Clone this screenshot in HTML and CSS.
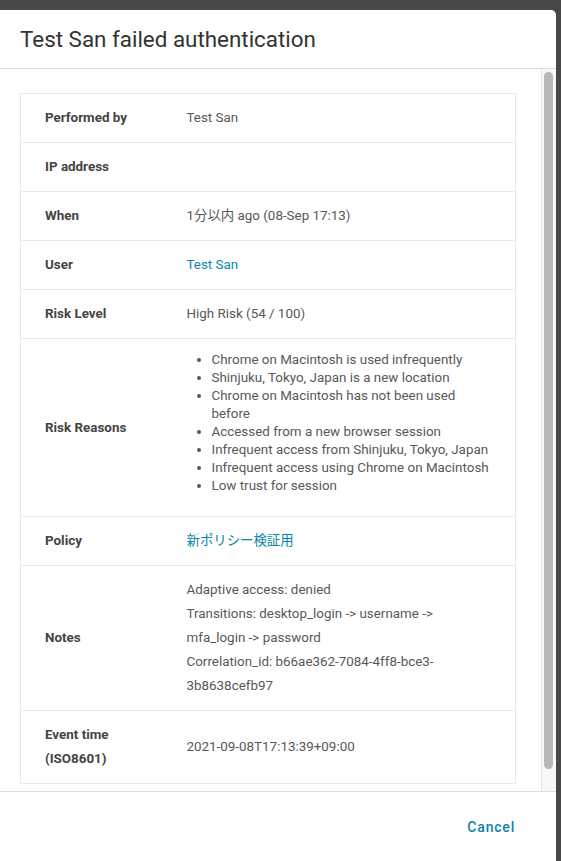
FILE: index.html
```html
<!DOCTYPE html>
<html lang="en">
<head>
  <meta charset="UTF-8" />
  <meta name="viewport" content="width=device-width, initial-scale=1.0" />
  <title>Event details</title>
  <link rel="stylesheet" href="styles.css">
</head>
<body>

  <div class="dialog">
    <div class="dialog-header">
      <h2>Test San failed authentication</h2>
    </div>

    <div class="dialog-body">
      <div class="dialog-content">
        <table class="details">
          <colgroup>
            <col class="col-label">
            <col>
          </colgroup>
          <tr>
            <td class="label">Performed by</td>
            <td>Test San</td>
          </tr>
          <tr>
            <td class="label">IP address</td>
            <td></td>
          </tr>
          <tr>
            <td class="label">When</td>
            <td>1分以内 ago (08-Sep 17:13)</td>
          </tr>
          <tr>
            <td class="label">User</td>
            <td><a href="#">Test San</a></td>
          </tr>
          <tr>
            <td class="label">Risk Level</td>
            <td>High Risk (54 / 100)</td>
          </tr>
          <tr>
            <td class="label">Risk Reasons</td>
            <td>
              <ul class="reasons">
                <li>Chrome on Macintosh is used infrequently</li>
                <li>Shinjuku, Tokyo, Japan is a new location</li>
                <li>Chrome on Macintosh has not been used before</li>
                <li>Accessed from a new browser session</li>
                <li>Infrequent access from Shinjuku, Tokyo, Japan</li>
                <li>Infrequent access using Chrome on Macintosh</li>
                <li>Low trust for session</li>
              </ul>
            </td>
          </tr>
          <tr>
            <td class="label">Policy</td>
            <td><a href="#">新ポリシー検証用</a></td>
          </tr>
          <tr>
            <td class="label">Notes</td>
            <td>
              <div>Adaptive access: denied</div>
              <div>Transitions: desktop_login -&gt; username -&gt; mfa_login -&gt; password</div>
              <div>Correlation_id: b66ae362-7084-4ff8-bce3-3b8638cefb97</div>
            </td>
          </tr>
          <tr>
            <td class="label">Event time (ISO8601)</td>
            <td>2021-09-08T17:13:39+09:00</td>
          </tr>
        </table>
      </div>

      <div class="scrollbar">
        <div class="scrollbar-thumb"></div>
      </div>
    </div>

    <div class="dialog-footer">
      <button class="text-button">Cancel</button>
    </div>
  </div>

</body>
</html>
```

FILE: styles.css
```css
body {
  font-family: Roboto, "Noto Sans CJK JP", sans-serif;
  margin: 0;
  padding: 0;
  background-color: #474948;
  overflow: hidden;
}

.dialog {
  margin-top: 10px;
  width: 556px;
  height: 851px;
  background-color: white;
  border-radius: 0 5px 0 0;
  display: flex;
  flex-direction: column;
}

.dialog-header {
  height: 58px;
  padding: 0 20px;
  border-bottom: 1px solid #dedede;
  display: flex;
  align-items: center;
}

.dialog-header h2 {
  margin: 0;
  font-size: 22.4px;
  font-weight: 400;
  color: #333;
}

.dialog-body {
  height: 722px;
  display: flex;
}

.dialog-content {
  flex: 1;
  overflow: hidden;
  padding: 24px 25px 0 20px;
}

.scrollbar {
  width: 9px;
  padding: 3px 3px 0 2px;
  border-left: 1px solid #e4e4e4;
  background-color: #f8f8f8;
}

.scrollbar-thumb {
  height: 697px;
  border-radius: 5px;
  background-color: #b8b8b8;
}

.details {
  width: 100%;
  table-layout: fixed;
  border-collapse: collapse;
  border: 1px solid #e9e9e9;
  font-size: 13.4px;
  line-height: 24px;
  color: #585858;
}

.col-label {
  width: 141px;
}

.details td {
  padding: 12px 25px;
  border-bottom: 1px solid #e9e9e9;
  vertical-align: middle;
}

.details td.label {
  padding-left: 24px;
  font-weight: 700;
  color: #444;
}

.details a {
  color: #0a84ad;
  text-decoration: none;
}

.reasons {
  margin: 0 0 9px;
  padding-left: 25px;
  line-height: 18px;
}

.dialog-footer {
  flex: 1;
  border-top: 1px solid #dedede;
  display: flex;
  justify-content: flex-end;
  align-items: flex-start;
  padding: 27px 41px 0 0;
}

.text-button {
  background: none;
  border: none;
  padding: 0;
  font-family: Roboto, sans-serif;
  font-size: 14px;
  font-weight: 500;
  letter-spacing: 0.8px;
  color: #0a84ad;
  cursor: pointer;
}
```
